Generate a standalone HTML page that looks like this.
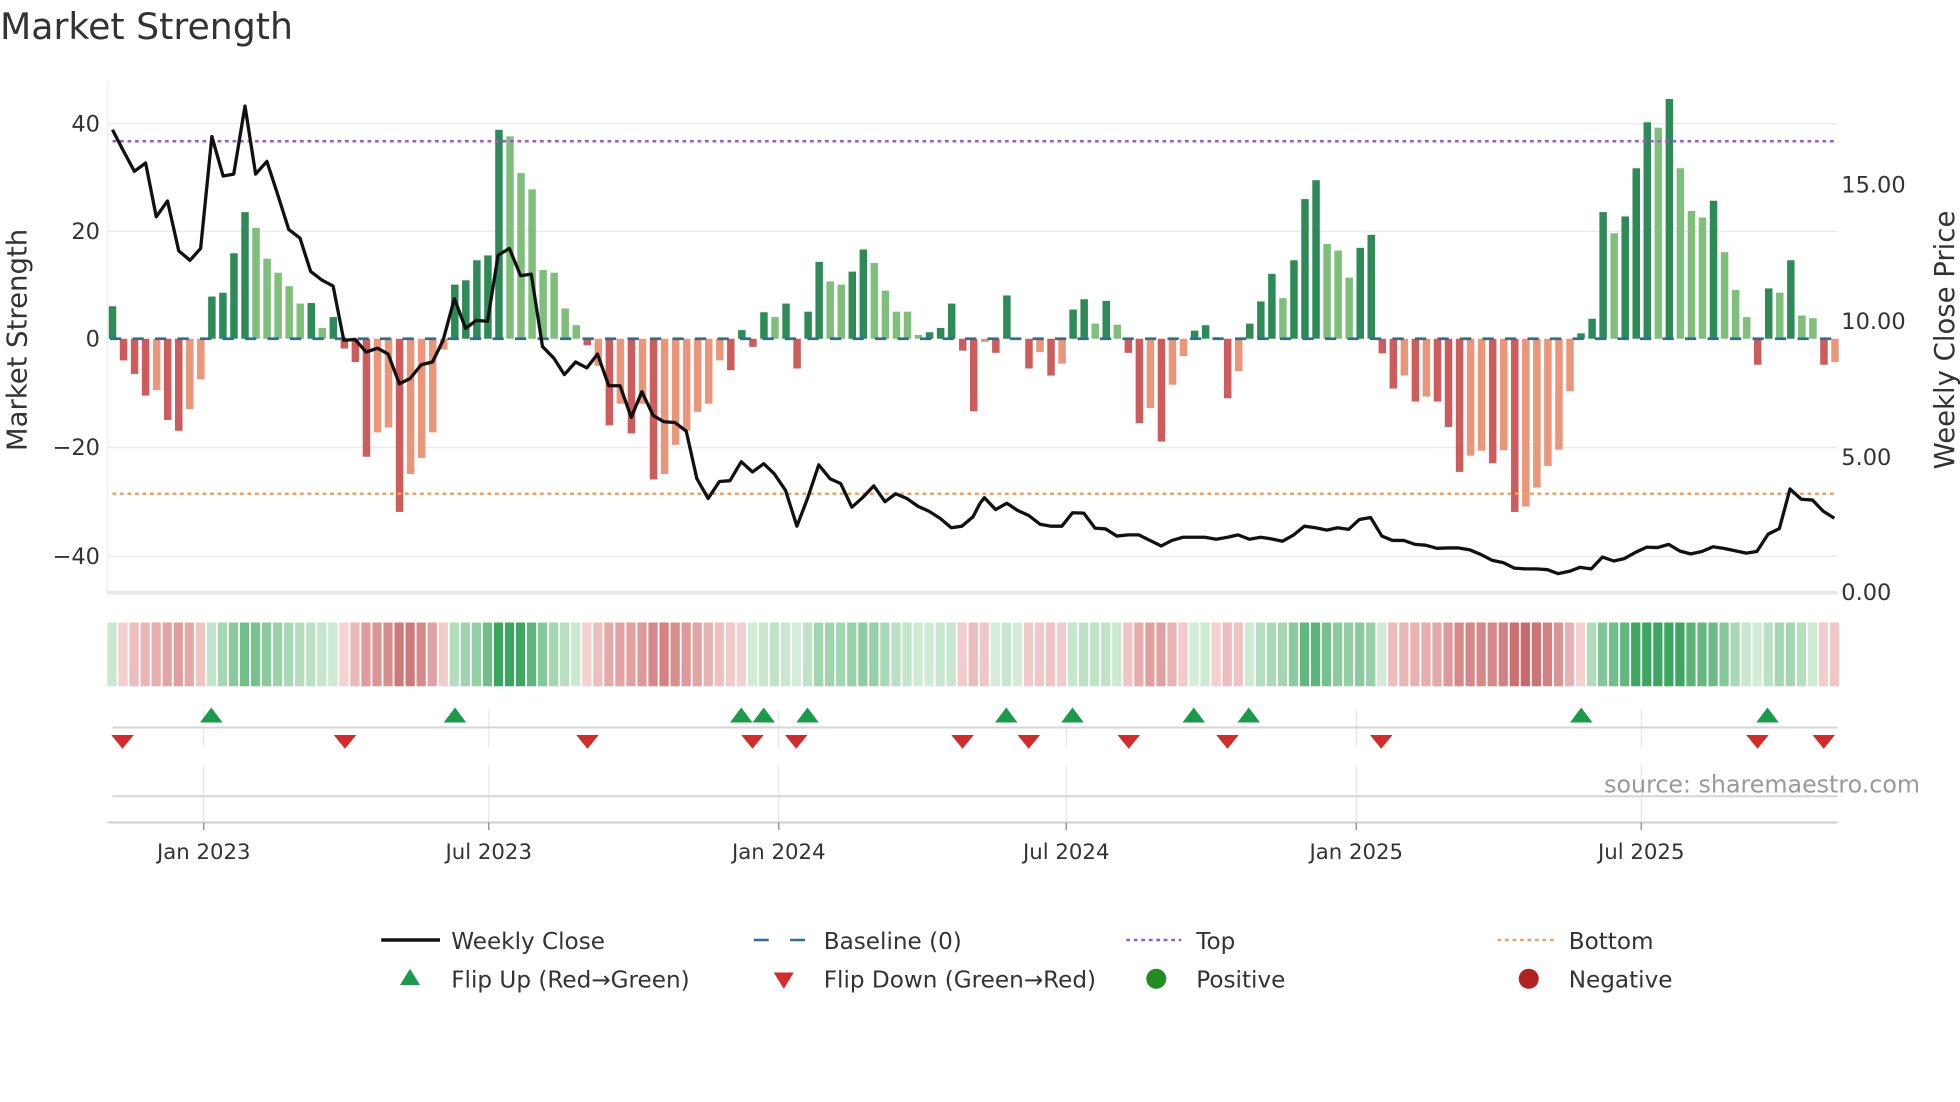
<!DOCTYPE html>
<html><head><meta charset="utf-8">
<style>
html,body{margin:0;padding:0;background:#fff;}
svg{display:block;font-family:"DejaVu Sans","Liberation Sans",sans-serif;}
</style></head>
<body>
<svg id="s" width="1960" height="1102" viewBox="0 0 1568 881.6" xmlns="http://www.w3.org/2000/svg">
<rect width="1568" height="882" fill="#fff"/>
<text x="0" y="31" font-size="29" fill="#333">Market Strength</text>
<g stroke="#ececec" stroke-width="1.2">
<line x1="86" x2="1470" y1="99" y2="99"/>
<line x1="86" x2="1470" y1="185" y2="185"/>
<line x1="86" x2="1470" y1="358" y2="358"/>
<line x1="86" x2="1470" y1="445" y2="445"/>
</g>
<line x1="86" x2="86" y1="65" y2="476" stroke="#eeeeee"/>
<line x1="86" x2="1470" y1="474" y2="474" stroke="#e6e6ee" stroke-width="3"/>
<g font-size="18" fill="#333" text-anchor="end">
<text x="80" y="105">40</text>
<text x="80" y="191">20</text>
<text x="80" y="277">0</text>
<text x="80" y="364">−20</text>
<text x="80" y="451">−40</text>
</g>
<g font-size="18" fill="#333">
<text x="1473" y="154">15.00</text>
<text x="1473" y="263">10.00</text>
<text x="1473" y="372">5.00</text>
<text x="1473" y="480">0.00</text>
</g>
<text transform="translate(21,272) rotate(-90)" font-size="22" fill="#333" text-anchor="middle">Market Strength</text>
<text transform="translate(1563,272) rotate(-90)" font-size="22" fill="#333" text-anchor="middle">Weekly Close Price</text>
<g id="bars"></g>
<line x1="86" x2="1470" y1="271" y2="271" stroke="#2a6f97" stroke-width="2.2" stroke-dasharray="9,9" stroke-dashoffset="-2"/>
<line x1="90" x2="1470" y1="113" y2="113" stroke="#9b59d6" stroke-width="2" stroke-dasharray="3,3"/>
<line x1="90" x2="1470" y1="395" y2="395" stroke="#f0a060" stroke-width="2" stroke-dasharray="3,3"/>
<g transform="scale(0.5,0.3165)">
<polyline fill="none" stroke="#111" stroke-width="3.3" vector-effect="non-scaling-stroke" stroke-linejoin="round" points="180,328 197,380 215,433 233,412 250,548 268,508 286,634 304,658 321,628 339,345 357,445 374,440 392,268 409,440 427,408 445,495 462,580 480,602 497,686 515,708 533,723 550,860 568,858 586,890 604,880 621,895 639,970 656,957 674,922 692,915 709,860 727,755 745,830 762,810 780,812 797,645 815,628 833,697 850,693 868,876 886,905 903,947 921,915 939,930 956,895 974,975 992,975 1010,1055 1027,990 1045,1050 1062,1066 1080,1068 1098,1090 1115,1210 1133,1260 1151,1217 1168,1215 1186,1167 1204,1193 1222,1172 1239,1198 1257,1240 1275,1330 1292,1260 1310,1175 1328,1210 1345,1222 1363,1282 1380,1258 1398,1228 1416,1268 1433,1248 1451,1260 1469,1280 1486,1292 1504,1310 1522,1334 1539,1330 1557,1306 1568,1272"/>
</g>
<g transform="translate(784,0) scale(0.5,0.3165)">
<polyline fill="none" stroke="#111" stroke-width="3.3" vector-effect="non-scaling-stroke" stroke-linejoin="round" points="0,1272 7,1258 25,1288 43,1272 60,1290 78,1303 96,1325 113,1330 131,1330 148,1296 166,1297 184,1335 201,1337 219,1355 237,1352 254,1352 272,1366 290,1380 307,1366 325,1358 343,1358 360,1358 378,1363 396,1358 413,1352 431,1363 449,1358 466,1362 484,1368 502,1352 519,1330 537,1334 555,1340 572,1334 590,1338 607,1313 625,1308 643,1355 660,1366 678,1366 696,1376 713,1378 731,1386 749,1385 766,1385 784,1390 802,1402 819,1416 837,1422 855,1436 872,1438 890,1438 908,1440 925,1450 943,1444 960,1434 978,1438 996,1408 1014,1418 1031,1412 1049,1396 1067,1383 1084,1384 1102,1376 1120,1393 1137,1400 1155,1394 1173,1382 1190,1386 1208,1392 1226,1398 1243,1394 1261,1350 1279,1336 1296,1236 1314,1262 1332,1264 1349,1292 1367,1310"/>
</g>
<g id="strip"></g>
<g stroke="#e4e8ee" stroke-width="1">
<line x1="163" x2="163" y1="568" y2="598"/><line x1="391" x2="391" y1="568" y2="598"/><line x1="623" x2="623" y1="568" y2="598"/><line x1="853" x2="853" y1="568" y2="598"/><line x1="1085" x2="1085" y1="568" y2="598"/><line x1="1313" x2="1313" y1="568" y2="598"/>
<line x1="163" x2="163" y1="612" y2="658"/><line x1="391" x2="391" y1="612" y2="658"/><line x1="623" x2="623" y1="612" y2="658"/><line x1="853" x2="853" y1="612" y2="658"/><line x1="1085" x2="1085" y1="612" y2="658"/><line x1="1313" x2="1313" y1="612" y2="658"/>
</g>
<line x1="90" x2="1470" y1="582" y2="582" stroke="#d6d6d6" stroke-width="1.6"/>
<line x1="90" x2="1470" y1="637" y2="637" stroke="#d6d6d6" stroke-width="1.6"/>
<line x1="86" x2="1470" y1="658" y2="658" stroke="#d0d0d0" stroke-width="1.6"/>
<g id="marks"></g>
<g stroke="#999" stroke-width="1.2">
<line x1="163" x2="163" y1="658" y2="664"/><line x1="391" x2="391" y1="658" y2="664"/><line x1="623" x2="623" y1="658" y2="664"/><line x1="853" x2="853" y1="658" y2="664"/><line x1="1085" x2="1085" y1="658" y2="664"/><line x1="1313" x2="1313" y1="658" y2="664"/>
</g>
<g font-size="17" fill="#333" text-anchor="middle">
<text x="163" y="687">Jan 2023</text><text x="391" y="687">Jul 2023</text><text x="623" y="687">Jan 2024</text><text x="853" y="687">Jul 2024</text><text x="1085" y="687">Jan 2025</text><text x="1313" y="687">Jul 2025</text>
</g>
<text x="1536" y="634" font-size="19" fill="#999" text-anchor="end">source: sharemaestro.com</text>
<g font-size="18.5" fill="#333">
<line x1="305" x2="352" y1="752" y2="752" stroke="#111" stroke-width="2.8"/>
<text x="361" y="759">Weekly Close</text>
<line x1="603" x2="645" y1="752" y2="752" stroke="#2a6f97" stroke-width="2" stroke-dasharray="12,17"/>
<text x="659" y="759">Baseline (0)</text>
<line x1="901" x2="945" y1="752" y2="752" stroke="#9b59d6" stroke-width="2" stroke-dasharray="3,3"/>
<text x="957" y="759">Top</text>
<line x1="1198" x2="1243" y1="752" y2="752" stroke="#f0a060" stroke-width="2" stroke-dasharray="3,3"/>
<text x="1255" y="759">Bottom</text>
<polygon points="320,788 336,788 328,775" fill="#1a9a4a"/>
<text x="361" y="790">Flip Up (Red→Green)</text>
<polygon points="619,778 635,778 627,791" fill="#d42a2a"/>
<text x="659" y="790">Flip Down (Green→Red)</text>
<circle cx="925" cy="783" r="8" fill="#228b22"/>
<text x="957" y="790">Positive</text>
<circle cx="1223" cy="783" r="8" fill="#b22222"/>
<text x="1255" y="790">Negative</text>
</g>
</svg>
<script>
var V=[[6,'DG'],[-4,'DR'],[-6.5,'DR'],[-10.5,'DR'],[-9.5,'LR'],[-15,'DR'],[-17,'DR'],[-13,'LR'],[-7.5,'LR'],[7.8,'DG'],[8.5,'DG'],[15.8,'DG'],[23.4,'DG'],[20.5,'LG'],[14.8,'LG'],[12.2,'LG'],[9.7,'LG'],[6.5,'LG'],[6.6,'DG'],[2,'LG'],[4,'DG'],[-1.8,'DR'],[-4.3,'DR'],[-21.8,'DR'],[-17.3,'LR'],[-16.4,'LR'],[-32,'DR'],[-25,'LR'],[-22,'LR'],[-17.3,'LR'],[-2,'LR'],[10,'DG'],[10.8,'DG'],[14.5,'DG'],[15.4,'DG'],[38.6,'DG'],[37.4,'LG'],[30.6,'LG'],[27.6,'LG'],[12.7,'LG'],[12.2,'LG'],[5.6,'LG'],[2.5,'LG'],[-1.2,'DR'],[-5,'LR'],[-16,'DR'],[-12,'LR'],[-17.5,'DR'],[-12,'LR'],[-26,'DR'],[-25,'LR'],[-19.6,'LR'],[-17,'LR'],[-13.5,'LR'],[-12,'LR'],[-4,'LR'],[-5.8,'DR'],[1.6,'DG'],[-1.5,'DR'],[4.9,'DG'],[4,'LG'],[6.5,'DG'],[-5.5,'DR'],[5,'DG'],[14.2,'DG'],[10.6,'LG'],[10,'LG'],[12.4,'DG'],[16.5,'DG'],[14,'LG'],[8.9,'LG'],[5,'LG'],[5,'LG'],[0.7,'LG'],[1.2,'DG'],[2,'DG'],[6.5,'DG'],[-2.2,'DR'],[-13.4,'DR'],
[-0.6,'LR'],[-2.6,'DR'],[8,'DG'],[0.2,'LG'],[-5.5,'DR'],[-2.5,'LR'],[-6.8,'DR'],[-4.6,'LR'],[5.4,'DG'],[7.3,'DG'],[2.8,'LG'],[7,'DG'],[2.6,'LG'],[-2.6,'DR'],[-15.6,'DR'],[-12.8,'LR'],[-19,'DR'],[-8.5,'LR'],[-3.2,'LR'],[1.5,'DG'],[2.5,'DG'],[0.3,'LG'],[-11,'DR'],[-6,'LR'],[2.8,'DG'],[6.9,'DG'],[12,'DG'],[7.5,'LG'],[14.5,'DG'],[25.8,'DG'],[29.3,'DG'],[17.5,'LG'],[16.3,'LG'],[11.3,'LG'],[16.8,'DG'],[19.2,'DG'],[-2.7,'DR'],[-9.2,'DR'],[-6.8,'LR'],[-11.6,'DR'],[-10.7,'LR'],[-11.6,'DR'],[-16.3,'DR'],[-24.6,'DR'],[-21.6,'LR'],[-20.7,'LR'],[-23,'DR'],[-20.6,'LR'],[-32,'DR'],[-31,'LR'],[-27.5,'LR'],[-23.5,'LR'],[-20.5,'LR'],[-9.7,'LR'],[1,'DG'],[3.7,'DG'],[23.4,'DG'],[19.5,'LG'],[22.6,'DG'],[31.5,'DG'],[40,'DG'],[39,'LG'],[44.3,'DG'],[31.5,'LG'],[23.6,'LG'],[22.4,'LG'],[25.5,'DG'],[16,'LG'],[9,'LG'],[4,'LG'],[-4.8,'DR'],[9.3,'DG'],[8.5,'LG'],[14.5,'DG'],[4.3,'LG'],[3.8,'LG'],[-4.8,'DR'],[-4.3,'LR']];
var C={DG:'#2e8b57',LG:'#7fbf7b',DR:'#cd5c5c',LR:'#e9967a'};
var NS='http://www.w3.org/2000/svg';
function el(p,t,a){var e=document.createElementNS(NS,t);for(var k in a)e.setAttribute(k,a[k]);p.appendChild(e);return e;}
var bars=document.getElementById('bars'),strip=document.getElementById('strip'),marks=document.getElementById('marks');
var dx=(1468-90)/(V.length-1);
function mix(a,b,t){var r=[];for(var i=0;i<3;i++)r.push(Math.round(a[i]+(b[i]-a[i])*t));return 'rgb('+r.join(',')+')';}
for(var i=0;i<V.length;i++){
 var v=V[i][0],x=90+i*dx,h=Math.abs(v)*4.33;
 el(bars,'rect',{x:x-3,y:v>0?271-h:271,width:6,height:Math.max(h,0.8),fill:C[V[i][1]]});
 var s=0,n=0;for(var j=i-1;j<=i+1;j++){if(j>=0&&j<V.length){s+=V[j][0]*(j==i?2:1);n+=(j==i?2:1);}}
 s/=n;var t=Math.min(Math.abs(s)/32,1);
 var col=s>=0?mix([214,238,218],[60,165,95],t):mix([246,214,214],[200,100,100],t);
 el(strip,'rect',{x:x-4.1,y:498,width:7.4,height:51,fill:col});
}
var up=[169,364,593,611,646,805,858,955,999,1265,1414],dn=[98,276,470,602,637,770,823,903,982,1105,1406,1459];
up.forEach(function(x){el(marks,'polygon',{points:(x-9)+',578 '+(x+9)+',578 '+x+',566',fill:'#1a9a4a'});});
dn.forEach(function(x){el(marks,'polygon',{points:(x-9)+',588 '+(x+9)+',588 '+x+',599',fill:'#d42a2a'});});
</script>
</body></html>
